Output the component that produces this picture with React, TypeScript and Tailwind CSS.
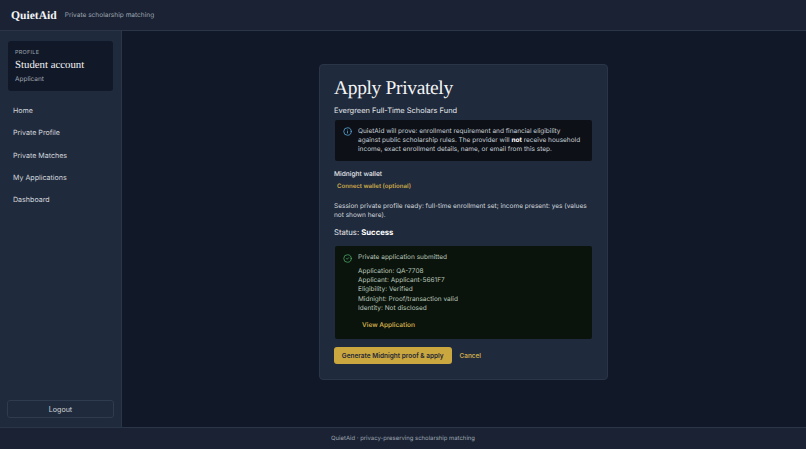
import { CircleCheck, Info } from 'lucide-react'

const navItems = ['Home', 'Private Profile', 'Private Matches', 'My Applications', 'Dashboard']

const resultLines = [
  'Application: QA-7708',
  'Applicant: Applicant-5661F7',
  'Eligibility: Verified',
  'Midnight: Proof/transaction valid',
  'Identity: Not disclosed',
]

const serif = "font-['Liberation_Serif',serif]"

export default function App() {
  return (
    <div className="flex h-[449px] w-[806px] flex-col overflow-hidden bg-[#111827] font-['Inter',sans-serif] text-[#e5e7eb] [text-rendering:geometricPrecision]">
      <header className="flex h-[31px] shrink-0 items-center gap-2 border-b border-[#2a3547] bg-[#1a2233] pt-[2px] pl-[11px]">
        <span className={`${serif} text-[11.6px] font-bold text-[#f3f4f6]`}>QuietAid</span>
        <span className="text-[6.55px] text-[#9ca3af]">Private scholarship matching</span>
      </header>

      <div className="flex min-h-0 flex-1">
        <aside className="flex w-[122px] shrink-0 flex-col border-r border-[#2a3547] bg-[#1f2a3c] px-2 pt-[10px] pb-[9px]">
          <div className="flex h-[50px] flex-col justify-center rounded-[3px] bg-[#111827] pt-[2px] pl-[7px]">
            <div className="text-[5.5px] leading-[9px] tracking-[0.05em] text-[#9ca3af]">PROFILE</div>
            <div className={`${serif} text-[10.8px] leading-[15px] text-[#f3f4f6]`}>Student account</div>
            <div className="mt-[1px] text-[6.5px] leading-[11px] text-[#9ca3af]">Applicant</div>
          </div>

          <nav className="mt-[9px] flex flex-col">
            {navItems.map((item) => (
              <div key={item} className="flex h-[22.4px] items-center px-[5px] text-[7.1px] text-[#d1d5db]">
                {item}
              </div>
            ))}
          </nav>

          <button className="-mx-[1px] mt-auto h-[18px] rounded-[3px] border border-[#2f3b4e] pt-[2px] text-[7.1px] text-[#d1d5db]">
            Logout
          </button>
        </aside>

        <main className="flex flex-1 items-start justify-center pt-[33px] pr-[1px]">
          <section className="h-[316px] w-[289px] rounded-[4px] border border-[#2a3547] bg-[#1f2a3c] px-[14px] pt-[13px]">
            <h1 className={`${serif} text-[19.5px] leading-[21px] tracking-[-0.35px] text-[#f3f4f6]`}>Apply Privately</h1>
            <p className="mt-[6px] text-[7.47px] leading-[12px] text-[#e5e7eb]">Evergreen Full-Time Scholars Fund</p>

            <div className="mx-[1px] mt-[3px] flex h-[41px] items-start gap-[6px] rounded-[2px] bg-[#0d1117] pt-[6.5px] pr-2 pl-2 text-[6.5px] leading-[9.4px] text-[#c6cbd3]">
              <Info className="h-[9px] w-[9px] shrink-0 text-[#5eb0e5]" />
              <p>
                QuietAid will prove: enrollment requirement and financial eligibility against public scholarship
                rules. The provider will <strong className="text-white">not</strong> receive household income, exact
                enrollment details, name, or email from this step.
              </p>
            </div>

            <div className="mt-[8px] text-[6.6px] font-medium leading-[10px] text-[#e5e7eb]">Midnight wallet</div>
            <div className="mt-[2.5px] pl-[3px] text-[6.1px] font-semibold leading-[10px] text-[#cba94a]">
              Connect wallet (optional)
            </div>

            <p className="mt-[10px] text-[6.5px] leading-[9.4px] text-[#d1d5db]">
              Session private profile ready: full-time enrollment set; income present: yes (values not shown here).
            </p>

            <div className="mt-[6.7px] text-[7.7px] leading-[12px] text-[#e5e7eb]">
              Status: <strong className="font-bold text-white">Success</strong>
            </div>

            <div className="mx-[1px] mt-[7px] h-[93px] rounded-[2px] bg-[#0a130c] pt-[7px] pl-2 text-[6.5px] leading-[9.4px] text-[#b9c6b9]">
              <div className="flex h-[10px] items-center gap-[6px]">
                <CircleCheck className="h-[9px] w-[9px] shrink-0 text-[#4fae6a]" />
                <span>Private application submitted</span>
              </div>
              <div className="mt-[3.5px] pl-[15px]">
                {resultLines.map((line) => (
                  <div key={line}>{line}</div>
                ))}
                <div className="mt-[7px] pl-[4px] font-semibold text-[#cba94a]">View Application</div>
              </div>
            </div>

            <div className="mt-2 flex items-center gap-2">
              <button className="h-[17px] w-[117.5px] rounded-[3px] bg-[#cba73f] pt-[2px] text-[6.5px] font-semibold text-[#1f2937]">
                Generate Midnight proof &amp; apply
              </button>
              <button className="pt-[2px] text-[6.4px] font-semibold text-[#cba94a]">Cancel</button>
            </div>
          </section>
        </main>
      </div>

      <footer className="flex h-[22px] shrink-0 items-center justify-center border-t border-[#2a3547] bg-[#1a2233] pt-[2px] text-[5.95px] text-[#9ca3af]">
        QuietAid · privacy-preserving scholarship matching
      </footer>
    </div>
  )
}
